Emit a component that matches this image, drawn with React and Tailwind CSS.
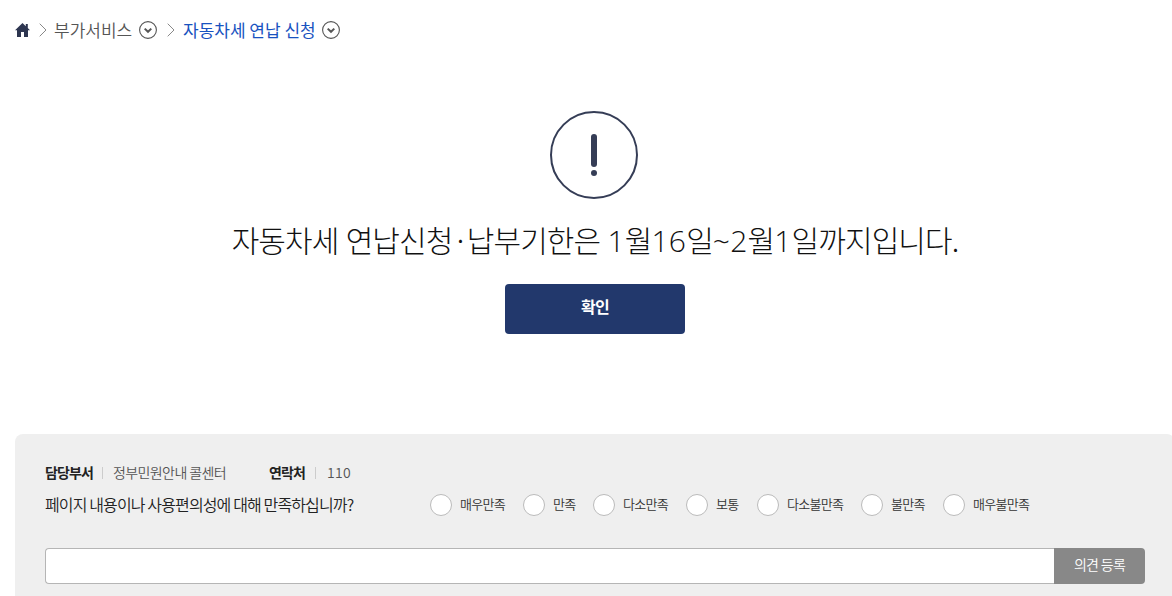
import React, { useState } from "react";

const options = [
  { label: "매우만족", width: "w-[93px]" },
  { label: "만족", width: "w-[70px]" },
  { label: "다소만족", width: "w-[93px]" },
  { label: "보통", width: "w-[71px]" },
  { label: "다소불만족", width: "w-[104px]" },
  { label: "불만족", width: "w-[82px]" },
  { label: "매우불만족", width: "w-[90px]" },
];

const HomeIcon = () => (
  <svg width="15" height="14" viewBox="0 0 15 14" className="shrink-0" fill="#2d3550">
    <path d="M7.5 0 0 7.3h2V14h4V9h3v5h4V7.3h2L12.8 5V1h-2v2.2z" />
  </svg>
);

const Separator = () => (
  <svg width="8" height="14" viewBox="0 0 8 14" className="shrink-0" fill="none" stroke="#888" strokeWidth="1">
    <path d="M.7.7 7 7 .7 13.3" />
  </svg>
);

const DropIcon = () => (
  <svg width="18" height="18" viewBox="0 0 18 18" className="shrink-0" fill="none" stroke="#555">
    <circle cx="9" cy="9" r="8.4" strokeWidth="1.1" />
    <path d="m5.7 7.6 3.3 3.2 3.3-3.2" strokeWidth="2" />
  </svg>
);

const Num = ({ children }) => (
  <span className="font-['Open_Sans',sans-serif] font-[350] tracking-[0.2px]">{children}</span>
);

const App = () => {
  const [selected, setSelected] = useState(null);
  const [opinion, setOpinion] = useState("");

  return (
    <div className="h-[596px] overflow-hidden bg-white font-['Noto_Sans_CJK_KR',sans-serif] font-[350] whitespace-nowrap">
      {/* Breadcrumb */}
      <nav className="flex h-[60px] items-center pl-[15px] text-[17px] leading-6">
        <HomeIcon />
        <span className="ml-[9px] flex">
          <Separator />
        </span>
        <a href="#" className="ml-[7px] w-[85px] text-[#555]">
          부가서비스
        </a>
        <DropIcon />
        <span className="ml-[10px] flex">
          <Separator />
        </span>
        <a href="#" className="ml-[8px] w-[139px] font-normal text-[#1852c0]">
          자동차세 연납 신청
        </a>
        <DropIcon />
      </nav>

      {/* Notice */}
      <main className="flex h-[374px] w-[1190px] flex-col items-center pt-[50px]">
        <svg width="90" height="90" viewBox="0 0 90 90" className="-ml-[2px]">
          <circle cx="45" cy="45" r="43" fill="none" stroke="#353d56" strokeWidth="2" />
          <rect x="42" y="24" width="6" height="33" rx="3" fill="#353d56" />
          <circle cx="45" cy="63" r="3" fill="#353d56" />
        </svg>
        <h1 className="mt-[17px] h-[44px] text-[30px] leading-[44px] font-light tracking-[-0.9px] [word-spacing:1.5px] text-[#111]">
          자동차세 연납신청<span className="tracking-[-2px]">·</span>납부기한은 <Num>1</Num>월<Num>16</Num>일<Num>~2</Num>월<Num>1</Num>일까지입니다.
        </h1>
        <button className="mt-[23px] h-[50px] w-[180px] rounded bg-[#22386c] pb-[7px] text-base font-bold tracking-[-0.7px] text-white">
          확인
        </button>
      </main>

      {/* Satisfaction survey */}
      <section className="ml-[15px] h-[180px] w-[1160px] rounded-lg bg-[#efefef] pt-[27px] pl-[30px]">
        <div className="flex h-[22px] items-center text-sm tracking-[-0.7px] text-[#555]">
          <strong className="w-[57px] font-bold tracking-[-0.9px] text-[#222]">담당부서</strong>
          <span className="mt-[2px] h-3 w-px bg-[#ccc]" />
          <span className="ml-[10px] w-[156px] tracking-[-0.6px]">정부민원안내 콜센터</span>
          <strong className="w-[46px] font-bold tracking-[-0.9px] text-[#222]">연락처</strong>
          <span className="mt-[2px] h-3 w-px bg-[#ccc]" />
          <span className="ml-[11px] tracking-[0.3px]">110</span>
        </div>

        <div className="mt-[10px] flex h-6 items-center">
          <p className="w-[385px] pb-[2px] text-base tracking-[-0.87px] text-[#222]">
            페이지 내용이나 사용편의성에 대해 만족하십니까?
          </p>
          {options.map((option) => (
            <label
              key={option.label}
              className={`${option.width} flex shrink-0 items-center text-[13px] tracking-[-0.7px] text-[#333]`}
            >
              <input
                type="radio"
                name="satisfaction"
                checked={selected === option.label}
                onChange={() => setSelected(option.label)}
                className="mr-2 size-[22px] shrink-0 appearance-none rounded-full border border-[#bbb] bg-white checked:border-[6px] checked:border-[#22386c]"
              />
              <span className="pb-[2px]">{option.label}</span>
            </label>
          ))}
        </div>

        <form className="mt-[31px] flex h-9" onSubmit={(e) => e.preventDefault()}>
          <input
            type="text"
            value={opinion}
            onChange={(e) => setOpinion(e.target.value)}
            className="w-[1009px] rounded-l-sm border border-r-0 border-[#b5b5b5] bg-white px-3 text-sm"
          />
          <button className="w-[91px] rounded-r-sm bg-[#888] pb-[4px] text-sm tracking-[-0.7px] text-white">
            의견 등록
          </button>
        </form>
      </section>
    </div>
  );
};

export default App;
